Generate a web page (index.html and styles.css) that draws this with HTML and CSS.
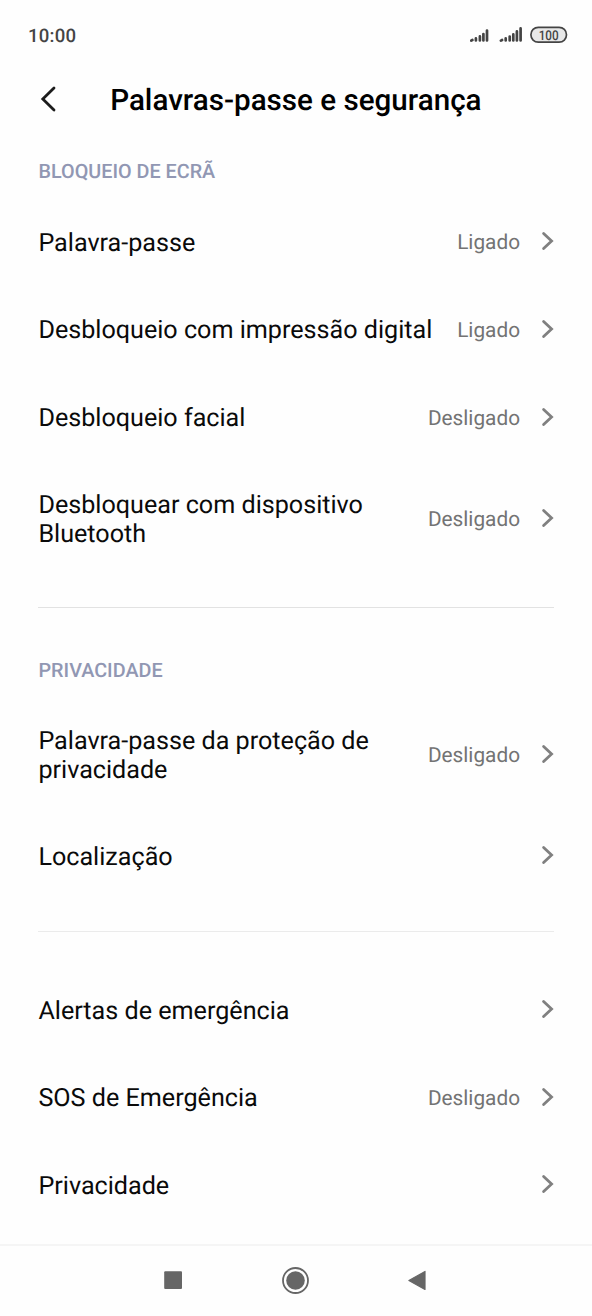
FILE: index.html
```html
<!DOCTYPE html>
<html lang="pt">
<head>
<meta charset="utf-8">
<title>Palavras-passe e segurança</title>
<link rel="stylesheet" href="styles.css">
</head>
<body>
<svg width="0" height="0" class="defs"><symbol id="chev" viewBox="0 0 14 20"><path d="M3.6 2.4 L11.6 10 L3.6 17.6" fill="none" stroke="#808080" stroke-width="2.8" stroke-linecap="round" stroke-linejoin="miter"/></symbol></svg>
<div class="screen">
  <div class="status">
    <span class="time">10:00</span>
    <svg class="status-icons" width="100" height="20" viewBox="0 0 100 20">
      <g stroke="#444" stroke-width="2.7" stroke-linecap="round">
        <path d="M1.2 15.6L2.4 15M5.9 15.4V13.4M9.9 15.4V11.4M13.4 15.4V9M17 15.4V5.6M30.9 15.6L32.1 15M35.7 15.4V13.4M39.7 15.4V11.6M43.3 15.4V9.4M46.9 15.4V6.4M50.6 15.4V3.4"/>
      </g>
      <rect x="60.9" y="2.3" width="35.6" height="14.9" rx="7.4" fill="#e8e8e8" stroke="#444" stroke-width="1.7"/>
      <text class="battery" x="78.7" y="14.6" text-anchor="middle" textLength="20" lengthAdjust="spacingAndGlyphs">100</text>
    </svg>
  </div>
  <header class="header">
    <svg class="back" width="18" height="28" viewBox="0 0 18 28"><path d="M14 2.9 L2.8 14 L14 25.1" fill="none" stroke="#1c1c1c" stroke-width="2.8" stroke-linecap="round"/></svg>
    <h1>Palavras-passe e segurança</h1>
  </header>
  <main>
    <h2 class="label first">BLOQUEIO DE ECRÃ</h2>
    <div class="row"><span class="name">Palavra-passe</span><span class="value">Ligado</span><svg class="chev"><use href="#chev"/></svg></div>
    <div class="row"><span class="name">Desbloqueio com impressão digital</span><span class="value">Ligado</span><svg class="chev"><use href="#chev"/></svg></div>
    <div class="row"><span class="name">Desbloqueio facial</span><span class="value">Desligado</span><svg class="chev"><use href="#chev"/></svg></div>
    <div class="row tall"><span class="name">Desbloquear com dispositivo<br>Bluetooth</span><span class="value">Desligado</span><svg class="chev"><use href="#chev"/></svg></div>
    <hr>
    <h2 class="label">PRIVACIDADE</h2>
    <div class="row tall"><span class="name">Palavra-passe da proteção de<br>privacidade</span><span class="value">Desligado</span><svg class="chev"><use href="#chev"/></svg></div>
    <div class="row"><span class="name">Localização</span><svg class="chev"><use href="#chev"/></svg></div>
    <hr class="light">
    <div class="row"><span class="name">Alertas de emergência</span><svg class="chev"><use href="#chev"/></svg></div>
    <div class="row"><span class="name">SOS de Emergência</span><span class="value">Desligado</span><svg class="chev"><use href="#chev"/></svg></div>
    <div class="row"><span class="name">Privacidade</span><svg class="chev"><use href="#chev"/></svg></div>
  </main>
  <nav class="nav">
    <svg width="28" height="28" viewBox="0 0 28 28"><rect x="5.2" y="5.2" width="17.8" height="17.8" rx="1" fill="#666"/></svg>
    <svg width="28" height="28" viewBox="0 0 28 28"><circle cx="14.5" cy="14.5" r="12.5" fill="none" stroke="#666" stroke-width="1.8"/><circle cx="14.5" cy="14.5" r="9.3" fill="#666"/></svg>
    <svg width="28" height="28" viewBox="0 0 28 28"><path d="M5.9 14.4 L22 5.4 V23.4 Z" fill="#666" stroke="#666" stroke-width="1.2" stroke-linejoin="round"/></svg>
  </nav>
</div>
</body>
</html>
```
FILE: styles.css
```css
* { box-sizing: border-box; }
body { margin: 0; background: #fefefe; font-family: Roboto, "Liberation Sans", sans-serif; text-rendering: geometricPrecision; }
.defs { display: block; }
.screen { width: 592px; height: 1316px; display: flex; flex-direction: column; overflow: hidden; }
.status { height: 70px; padding: 0 22px 0 28px; display: flex; align-items: center; justify-content: space-between; flex: none; }
.time { font-size: 18.6px; font-weight: 500; color: #444; letter-spacing: .2px; padding-top: 1px; }
.battery { font-size: 13.4px; font-weight: 500; fill: #444; }
.header { height: 60px; flex: none; display: flex; align-items: center; padding-left: 39.5px; }
.back { margin: 0 52.7px 2px 0; }
h1 { margin: 0; padding-top: 2px; font-size: 29.6px; font-weight: 500; color: #000; white-space: nowrap; }
main { height: 1114px; padding: 0 38px; flex: none; }
.label { margin: 0; font-size: 19.8px; line-height: 24px; font-weight: 500; color: #9197b3; padding: 51px 0 14px .5px; }
.label.first { padding: 30px 0 14px .5px; }
.row { height: 87.7px; display: flex; align-items: center; }
.row.tall { height: 115px; }
.name { flex: 1; font-size: 25.15px; line-height: 29.5px; color: #0a0a0a; white-space: nowrap; padding: 3.4px 0 0 .4px; }
.value { font-size: 20.8px; color: #737373; padding-top: 3px; }
.row.tall .value { padding-top: 2px; }
.chev { width: 14px; height: 20px; margin: 0 0 1px 20px; }
hr { border: 0; height: 1px; background: #e2e2e2; margin: 31px 0 0; }
hr.light { background: #ebebeb; margin: 31px 0 34px; }
.nav { height: 72px; border-top: 2px solid #f5f5f5; display: flex; justify-content: center; align-items: center; gap: 94px; flex: none; padding: 0 2px 2px 0; }
```
